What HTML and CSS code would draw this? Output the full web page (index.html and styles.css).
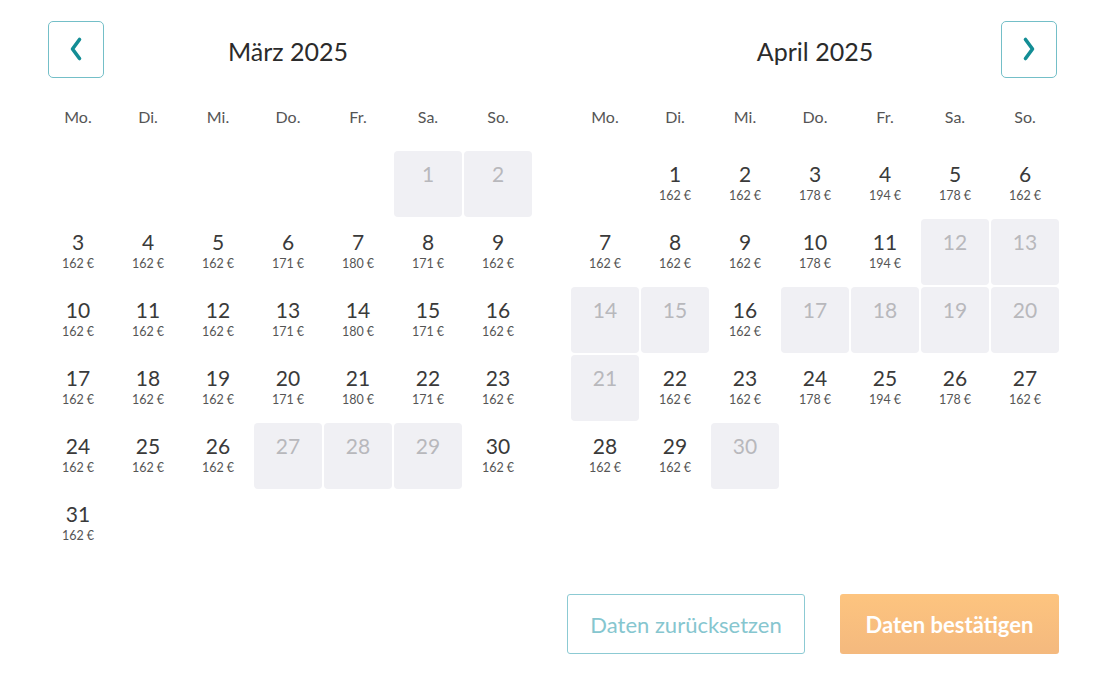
FILE: index.html
```html
<!DOCTYPE html>
<html lang="de">
<head>
<meta charset="utf-8">
<link rel="stylesheet" href="styles.css">
</head>
<body>
<div class="picker">
  <div class="months">
    <section class="month">
      <div class="head">
        <button class="nav nav-prev" aria-label="Zurück"><svg width="16" height="30" viewBox="0 0 16 30"><path d="M11.5 5.5 L4.5 15 L11.5 24.5" fill="none" stroke="#138d95" stroke-width="3.6" stroke-linecap="round" stroke-linejoin="round"/></svg></button>
        <h2 class="title">März 2025</h2>
        <span class="spacer"></span>
      </div>
      <div class="weekdays"><span>Mo.</span><span>Di.</span><span>Mi.</span><span>Do.</span><span>Fr.</span><span>Sa.</span><span>So.</span></div>
      <div class="grid">
        <div class="empty"></div><div class="empty"></div><div class="empty"></div><div class="empty"></div><div class="empty"></div>
        <div class="day off"><b>1</b></div><div class="day off"><b>2</b></div>
        <div class="day"><b>3</b><i>162&#8239;€</i></div><div class="day"><b>4</b><i>162&#8239;€</i></div><div class="day"><b>5</b><i>162&#8239;€</i></div><div class="day"><b>6</b><i>171&#8239;€</i></div><div class="day"><b>7</b><i>180&#8239;€</i></div><div class="day"><b>8</b><i>171&#8239;€</i></div><div class="day"><b>9</b><i>162&#8239;€</i></div>
        <div class="day"><b>10</b><i>162&#8239;€</i></div><div class="day"><b>11</b><i>162&#8239;€</i></div><div class="day"><b>12</b><i>162&#8239;€</i></div><div class="day"><b>13</b><i>171&#8239;€</i></div><div class="day"><b>14</b><i>180&#8239;€</i></div><div class="day"><b>15</b><i>171&#8239;€</i></div><div class="day"><b>16</b><i>162&#8239;€</i></div>
        <div class="day"><b>17</b><i>162&#8239;€</i></div><div class="day"><b>18</b><i>162&#8239;€</i></div><div class="day"><b>19</b><i>162&#8239;€</i></div><div class="day"><b>20</b><i>171&#8239;€</i></div><div class="day"><b>21</b><i>180&#8239;€</i></div><div class="day"><b>22</b><i>171&#8239;€</i></div><div class="day"><b>23</b><i>162&#8239;€</i></div>
        <div class="day"><b>24</b><i>162&#8239;€</i></div><div class="day"><b>25</b><i>162&#8239;€</i></div><div class="day"><b>26</b><i>162&#8239;€</i></div><div class="day off"><b>27</b></div><div class="day off"><b>28</b></div><div class="day off"><b>29</b></div><div class="day"><b>30</b><i>162&#8239;€</i></div>
        <div class="day"><b>31</b><i>162&#8239;€</i></div>
      </div>
    </section>
    <section class="month">
      <div class="head">
        <span class="spacer"></span>
        <h2 class="title">April 2025</h2>
        <button class="nav nav-next" aria-label="Weiter"><svg width="16" height="30" viewBox="0 0 16 30"><path d="M4.5 5.5 L11.5 15 L4.5 24.5" fill="none" stroke="#138d95" stroke-width="3.6" stroke-linecap="round" stroke-linejoin="round"/></svg></button>
      </div>
      <div class="weekdays"><span>Mo.</span><span>Di.</span><span>Mi.</span><span>Do.</span><span>Fr.</span><span>Sa.</span><span>So.</span></div>
      <div class="grid">
        <div class="empty"></div>
        <div class="day"><b>1</b><i>162&#8239;€</i></div><div class="day"><b>2</b><i>162&#8239;€</i></div><div class="day"><b>3</b><i>178&#8239;€</i></div><div class="day"><b>4</b><i>194&#8239;€</i></div><div class="day"><b>5</b><i>178&#8239;€</i></div><div class="day"><b>6</b><i>162&#8239;€</i></div>
        <div class="day"><b>7</b><i>162&#8239;€</i></div><div class="day"><b>8</b><i>162&#8239;€</i></div><div class="day"><b>9</b><i>162&#8239;€</i></div><div class="day"><b>10</b><i>178&#8239;€</i></div><div class="day"><b>11</b><i>194&#8239;€</i></div><div class="day off"><b>12</b></div><div class="day off"><b>13</b></div>
        <div class="day off"><b>14</b></div><div class="day off"><b>15</b></div><div class="day"><b>16</b><i>162&#8239;€</i></div><div class="day off"><b>17</b></div><div class="day off"><b>18</b></div><div class="day off"><b>19</b></div><div class="day off"><b>20</b></div>
        <div class="day off"><b>21</b></div><div class="day"><b>22</b><i>162&#8239;€</i></div><div class="day"><b>23</b><i>162&#8239;€</i></div><div class="day"><b>24</b><i>178&#8239;€</i></div><div class="day"><b>25</b><i>194&#8239;€</i></div><div class="day"><b>26</b><i>178&#8239;€</i></div><div class="day"><b>27</b><i>162&#8239;€</i></div>
        <div class="day"><b>28</b><i>162&#8239;€</i></div><div class="day"><b>29</b><i>162&#8239;€</i></div><div class="day off"><b>30</b></div>
      </div>
    </section>
  </div>
  <div class="actions">
    <button class="btn btn-reset">Daten zurücksetzen</button>
    <button class="btn btn-confirm">Daten bestätigen</button>
  </div>
</div>
</body>
</html>
```
FILE: styles.css
```css
html, body {
  margin: 0;
  padding: 0;
  background: #fff;
}
body {
  font-family: Lato, "Open Sans", "Liberation Sans", sans-serif;
  color: #333;
}
.picker {
  width: 1015px;
  padding: 20px 0 0 44px;
}
.months {
  display: flex;
  gap: 39px;
}
.month {
  width: 488px;
}
.head {
  display: grid;
  grid-template-columns: 60px 1fr 60px;
  align-items: center;
  height: 58px;
}
.nav {
  width: 56px;
  height: 57px;
  box-sizing: border-box;
  border: 1px solid #74bfc8;
  border-radius: 5px;
  background: #fff;
  display: flex;
  align-items: center;
  justify-content: center;
  padding: 0;
}
.nav-prev { margin-left: 4px; }
.nav-next { justify-self: end; margin-right: 2px; }
.spacer { display: block; }
.title {
  margin: 0;
  text-align: center;
  font-weight: 400;
  font-size: 25px;
  color: #2b2b2b;
  padding-top: 4px;
}
.weekdays {
  display: grid;
  grid-template-columns: repeat(7, 68px);
  column-gap: 2px;
  padding-top: 28px;
  margin-bottom: 23px;
  line-height: 22px;
  font-size: 16px;
  color: #555;
  text-align: center;
}
.grid {
  display: grid;
  grid-template-columns: repeat(7, 68px);
  grid-auto-rows: 66px;
  gap: 2px;
}
.day {
  display: flex;
  flex-direction: column;
  align-items: center;
  padding-top: 11px;
  box-sizing: border-box;
  border-radius: 4px;
}
.day b {
  font-weight: 400;
  font-size: 21px;
  line-height: 24px;
  color: #3a3a3a;
}
.day i {
  font-style: normal;
  font-size: 12.5px;
  line-height: 16px;
  margin-top: 2px;
  color: #555;
}
.day.off {
  background: #f0f0f4;
}
.day.off b {
  color: #b8b8bc;
}
.actions {
  display: flex;
  justify-content: flex-end;
  gap: 35px;
  margin-top: 37px;
}
.btn {
  height: 60px;
  box-sizing: border-box;
  font-family: inherit;
  font-size: 22px;
  border-radius: 3px;
  padding: 0;
}
.btn-reset {
  width: 238px;
  background: #fff;
  border: 1px solid #8ccad3;
  color: #86c6cf;
}
.btn-confirm {
  width: 219px;
  border: none;
  background: linear-gradient(#fdc47f, #f4b97e);
  color: #fff;
  font-weight: 700;
}
```
